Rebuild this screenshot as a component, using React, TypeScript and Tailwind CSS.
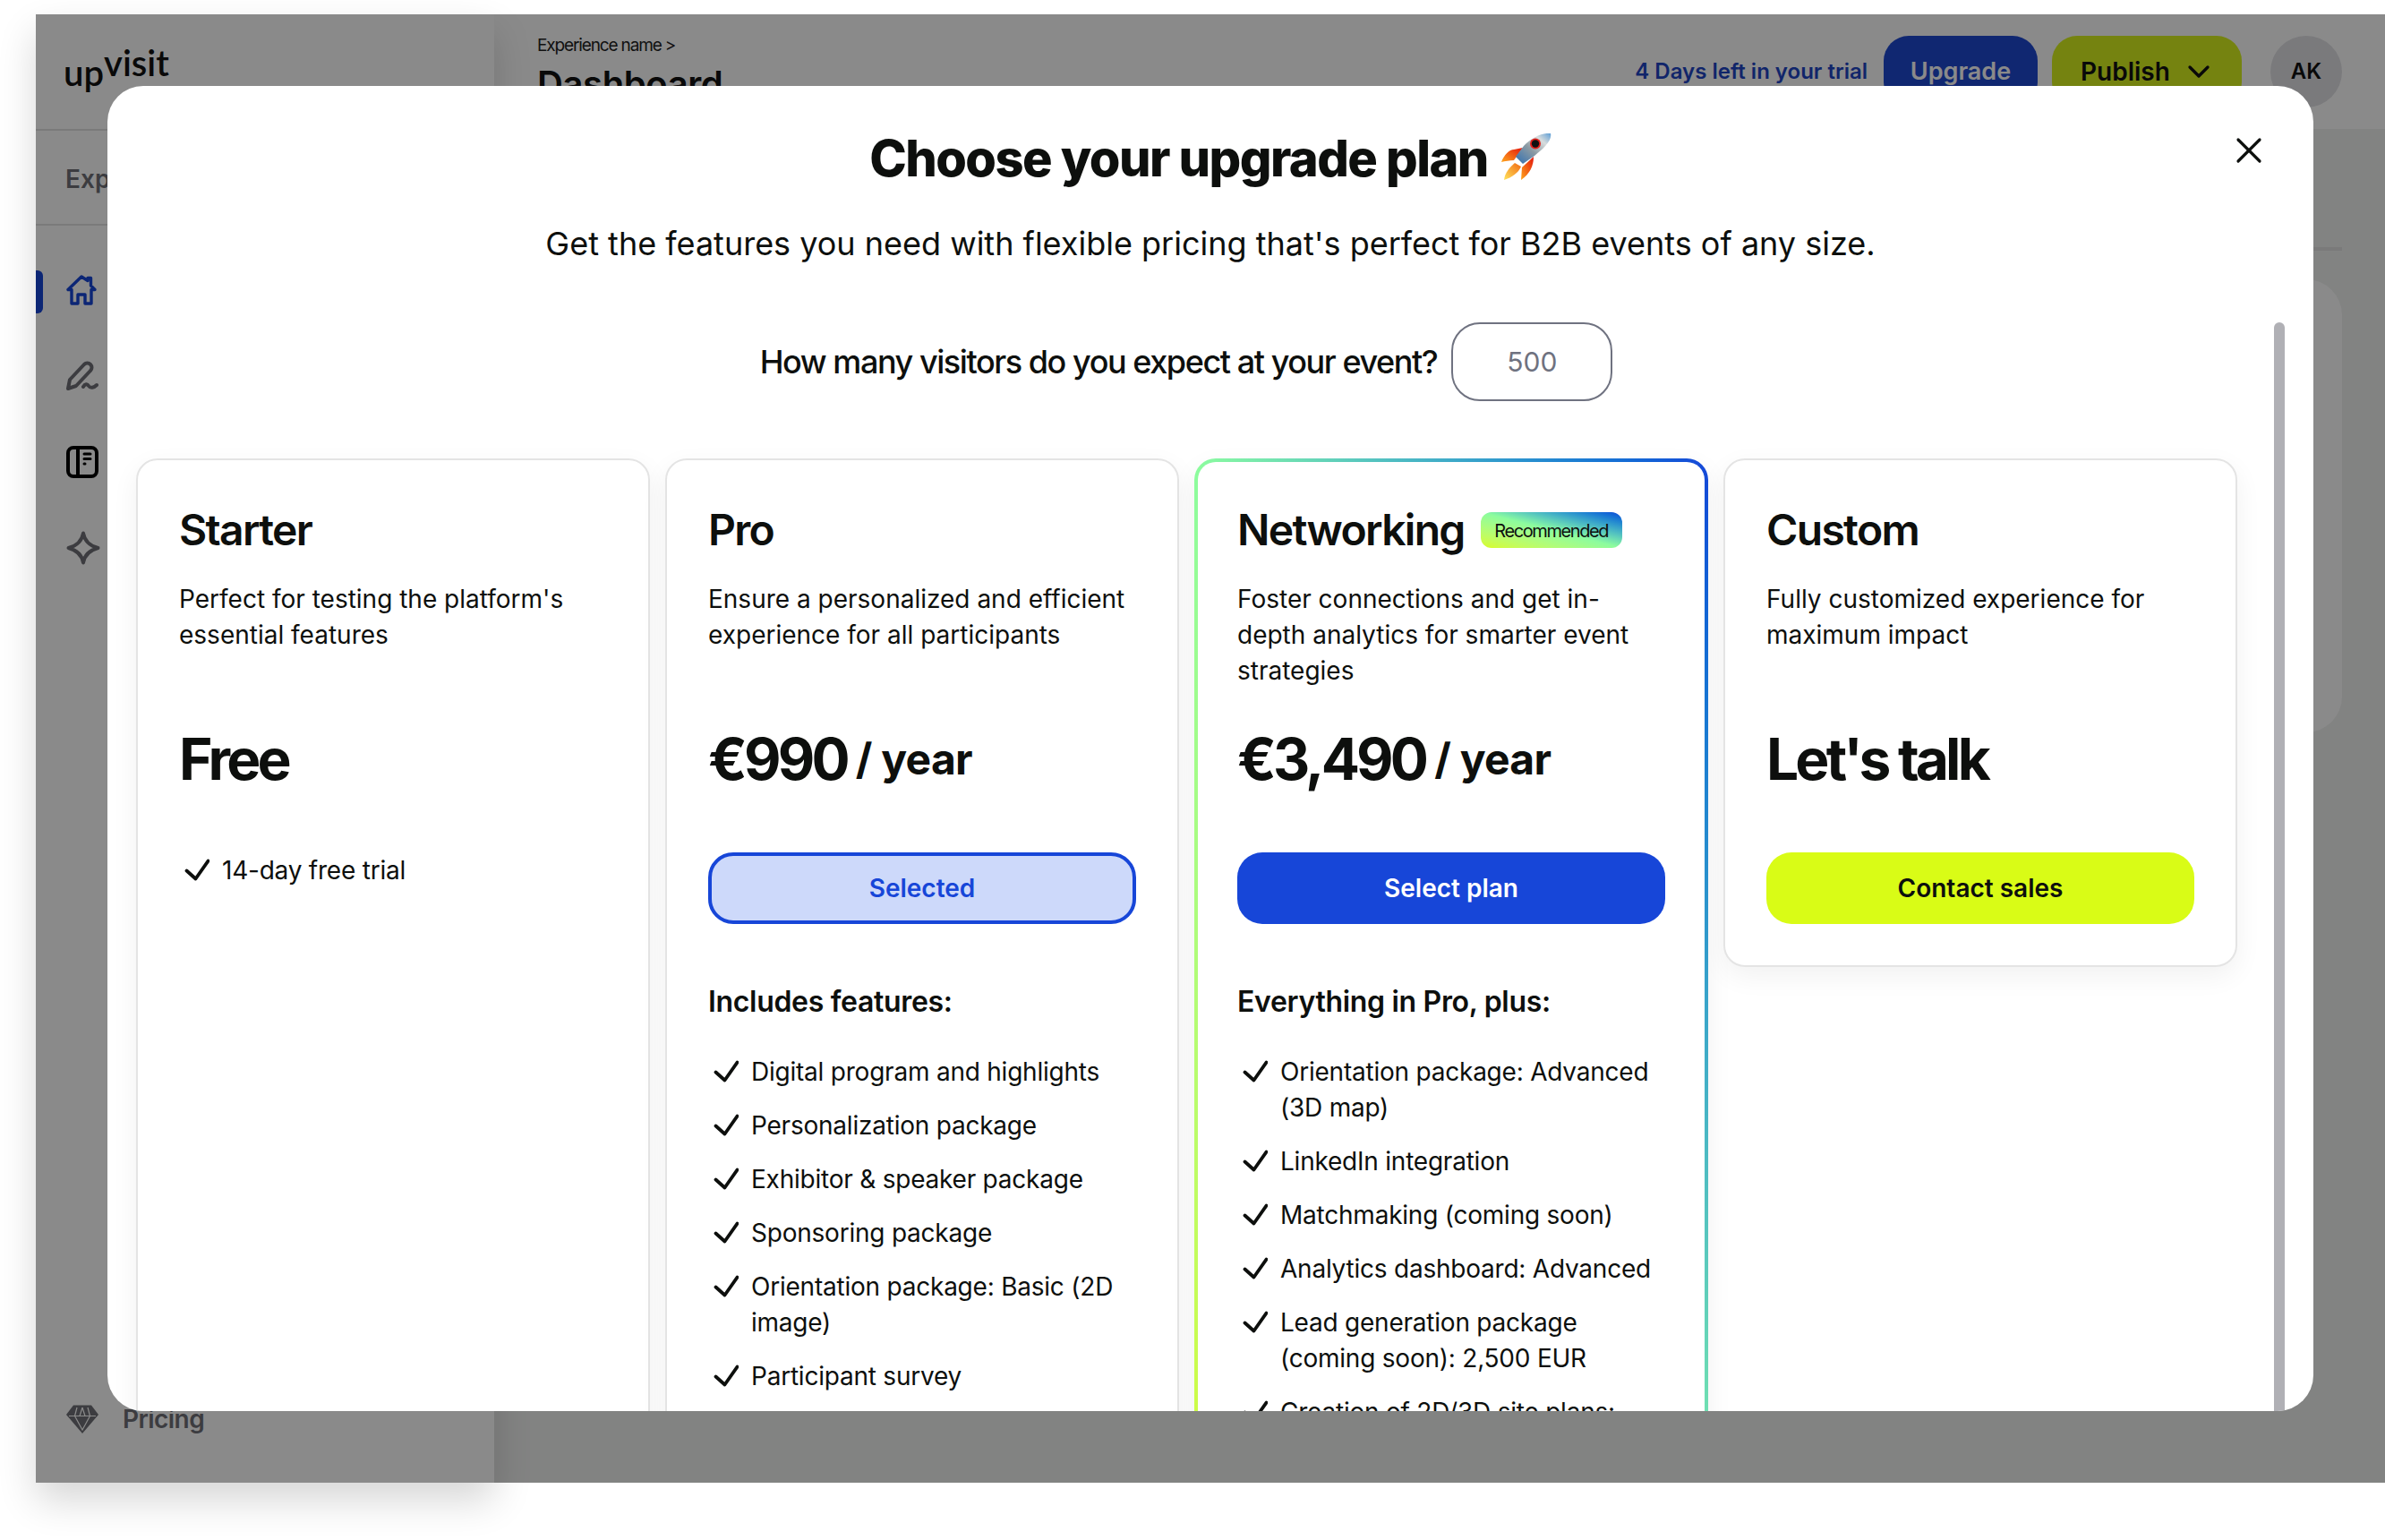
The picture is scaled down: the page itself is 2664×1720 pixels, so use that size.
import React from "react";
import { ChevronDown, X } from "lucide-react";

function Check() {
  return (
    <svg viewBox="0 0 32 32" className="w-8 h-8 shrink-0 mt-1 ml-[2px] mr-[14px]" fill="none" stroke="#0d0f0d" strokeWidth="3.8" strokeLinecap="round" strokeLinejoin="round">
      <path d="M6.5 16.5L16.5 25.5L30.5 5.5" />
    </svg>
  );
}

function Feature({ text }: { text: string }) {
  return (
    <li className="flex items-start text-[28px] leading-[40px] tracking-[-0.008em] text-[#0d0f0d]">
      <Check />
      <span>{text}</span>
    </li>
  );
}

function Rocket() {
  return (
    <svg viewBox="0 0 56 52" className="w-[56px] h-[52px] ml-[15px] -mt-[4px] shrink-0">
      <defs>
        <linearGradient id="rb" x1="1" y1="0" x2="0" y2="1">
          <stop offset="0" stopColor="#5f9fd6" />
          <stop offset="0.25" stopColor="#d8dcdc" />
          <stop offset="0.55" stopColor="#8b9aa3" />
          <stop offset="1" stopColor="#2f6fb2" />
        </linearGradient>
        <linearGradient id="rf" x1="0" y1="1" x2="1" y2="0">
          <stop offset="0" stopColor="#ffa51c" />
          <stop offset="1" stopColor="#e3150c" />
        </linearGradient>
        <linearGradient id="rg" x1="0" y1="1" x2="1" y2="0">
          <stop offset="0" stopColor="#ffe45c" />
          <stop offset="1" stopColor="#f26a12" />
        </linearGradient>
      </defs>
      <path d="M0 32C3 24 9 18 14 18L24 16L14 30C9 30 4 31 0 32Z" fill="url(#rf)" />
      <path d="M22 52L23 38L36 26C36 36 32 45 22 52Z" fill="url(#rf)" />
      <path d="M3 52C4 44 9 38 15 33L22 37C19 44 12 49 3 52Z" fill="url(#rg)" />
      <path d="M55 0C47 -1 34 4 25 14L16 26L24 34L37 25C47 17 57 8 55 0Z" fill="url(#rb)" />
      <circle cx="38" cy="11.5" r="6" fill="#e3201b" />
      <circle cx="38" cy="11.5" r="4.2" fill="#111" />
    </svg>
  );
}

function HomeIcon() {
  return (
    <svg viewBox="0 0 34 34" className="w-[34px] h-[34px]" fill="none" stroke="#1746d8" strokeWidth="3.4" strokeLinecap="round" strokeLinejoin="round">
      <path d="M17 2L2 16.5H6V32H13V22H21V32H28V16.5H32L27.5 12V3.5H24V6.5L17 2Z" />
    </svg>
  );
}

function PenIcon() {
  return (
    <svg viewBox="0 0 36 34" className="w-9 h-[34px]" fill="none" stroke="#6f7076" strokeWidth="4" strokeLinecap="round" strokeLinejoin="round">
      <path d="M2 31L4 21L20 4C22 2 25 2 27 4C29 6 29 9 27 11L11 28L2 31Z" />
      <path d="M19 29C21 25.5 23.5 25.5 25 28C27 31 31 30 34 27" />
    </svg>
  );
}

function BookIcon() {
  return (
    <svg viewBox="0 0 36 36" className="w-9 h-9" fill="none" stroke="#000" strokeWidth="4" strokeLinecap="round">
      <rect x="2" y="2" width="32" height="32" rx="6" />
      <path d="M13 2V34" />
      <path d="M20 9H27M20 14.5H27M20 20H21" strokeWidth="3" />
    </svg>
  );
}

function StarIcon() {
  return (
    <svg viewBox="0 0 38 38" className="w-[38px] h-[38px]" fill="none" stroke="#6f7076" strokeWidth="4" strokeLinejoin="round">
      <path d="M19 2.5C20.5 11 26 16.5 35.5 19C26 21.5 20.5 27 19 35.5C17.5 27 12 21.5 2.5 19C12 16.5 17.5 11 19 2.5Z" />
    </svg>
  );
}

function GemIcon() {
  return (
    <svg viewBox="0 0 36 32" className="w-9 h-8">
      <path d="M8 0.5H28L36 11L18 32L0 11L8 0.5Z" fill="#6f7076" />
      <path d="M3 12.5H33M12 3L9.5 12.5L18 28L26.5 12.5L24 3M18 3L15 12.5M18 3L21 12.5" fill="none" stroke="#ffffff" strokeWidth="1.2" />
    </svg>
  );
}

function Nav({ children, active }: { children: React.ReactNode; active?: boolean }) {
  return (
    <div className="relative h-[96px] flex items-center pl-[34px]">
      {active && <div className="absolute left-0 top-[26px] h-[48px] w-2 bg-[#1746d8] rounded-r-md" />}
      {children}
    </div>
  );
}

const cardBase = "rounded-[24px] bg-white shadow-[0_10px_30px_rgba(0,0,0,0.06)]";

function CardBody({ title, badge, desc, price, unit, children }: { title: string; badge?: boolean; desc: string; price: string; unit?: string; children?: React.ReactNode }) {
  return (
    <>
      <div className="flex items-center h-14">
        <h2 className="text-[48px] leading-[56px] font-semibold tracking-[-0.035em] text-[#0d0f0d]">{title}</h2>
        {badge && (
          <span className="ml-[18px] h-10 w-[158px] rounded-xl bg-gradient-to-tr from-[#d9fc16] via-[#8cfc9e] to-[#1746d8] text-[20px] font-normal tracking-[-0.07em] text-[#0d0f0d] flex items-center justify-center pt-[2px]">
            Recommended
          </span>
        )}
      </div>
      <p className="mt-[29px] h-[120px] text-[28px] leading-[40px] text-[#0d0f0d]">{desc}</p>
      <div className="mt-[39px] h-20 flex items-center text-[#0d0f0d] font-bold">
        <span className="text-[64px] tracking-[-0.06em]">{price}</span>
        {unit && <span className="text-[48px] ml-[10px] tracking-[-0.015em]">{unit}</span>}
      </div>
      {children}
    </>
  );
}

export default function App() {
  return (
    <div className="relative w-[2664px] h-[1720px] overflow-hidden bg-white pt-4 pl-10 font-[Inter,sans-serif]">
      <div className="relative flex h-[1640px] w-[2624px] bg-[#f1f2f1]">
        {/* sidebar */}
        <aside className="relative z-10 flex flex-col w-[512px] shrink-0 bg-white shadow-[0_20px_40px_rgba(0,0,0,0.16)]">
          <div className="h-[130px] border-b-2 border-[#e2e2e2] pl-[31px] pt-[24px] font-[Lato,sans-serif] font-semibold text-[#111] flex items-start">
            <span className="text-[40px] leading-[60px] mt-[11px]">up</span>
            <span className="text-[40px] leading-[60px]">visit</span>
          </div>
          <div className="h-[106px] border-b-2 border-[#e2e2e2] pl-[33px] pt-[4px] flex items-center text-[28px] font-semibold text-[#6f7076]">
            Experiences
          </div>
          <nav className="mt-[24px] flex flex-col">
            <Nav active><HomeIcon /></Nav>
            <Nav><PenIcon /></Nav>
            <Nav><BookIcon /></Nav>
            <Nav><StarIcon /></Nav>
          </nav>
          <div className="mt-auto mb-[51px] h-10 flex items-center pl-[34px]">
            <GemIcon />
            <span className="ml-[27px] text-[28px] font-semibold text-[#6f7076] tracking-[-0.02em]">Pricing</span>
          </div>
        </aside>

        {/* main */}
        <main className="flex-1 min-w-0">
          <header className="h-[128px] bg-white pl-12 pr-12 flex items-center justify-between">
            <div className="self-start pt-[22px]">
              <div className="text-[19px] leading-[26px] tracking-[-0.06em] text-[#222]">Experience name &gt;</div>
              <div className="mt-[6px] text-[40px] leading-[48px] font-semibold tracking-[-0.01em] text-[#111]">Dashboard</div>
            </div>
            <div className="flex items-center">
              <span className="text-[24px] font-semibold text-[#1f45c4] mr-[18px]">4 Days left in your trial</span>
              <button className="w-[172px] h-20 rounded-[28px] bg-[#1f49d1] text-white text-[27px] font-semibold">Upgrade</button>
              <button className="ml-4 w-[212px] h-20 rounded-[28px] bg-[#d9f21f] text-[#111] text-[28px] font-semibold flex items-center pl-[32px]">
                Publish
                <ChevronDown size={40} strokeWidth={2} className="ml-[12px]" />
              </button>
              <div className="ml-8 w-20 h-20 rounded-full bg-[#e2e2e6] text-[#111] text-[24px] font-semibold flex items-center justify-center">AK</div>
            </div>
          </header>
          <div className="px-12">
            <div className="mt-[132px] h-1 bg-[#e2e2e2]" />
            <div className="mt-8 h-[506px] rounded-[40px] bg-white" />
          </div>
        </main>

        <div className="absolute inset-0 z-20 bg-black/46" />

        {/* modal */}
        <section className="absolute z-30 left-[80px] top-[80px] w-[2464px] h-[1480px] rounded-[40px] bg-white overflow-hidden">
          <div className="flex flex-col items-center pt-[49px]">
            <div className="flex items-center h-16">
              <h1 className="text-[56px] leading-[64px] font-extrabold tracking-[-0.028em] text-[#0d0f0d]">Choose your upgrade plan</h1>
              <Rocket />
            </div>
            <p className="mt-[39px] text-[36px] leading-[48px] text-[#0d0f0d]">Get the features you need with flexible pricing that's perfect for B2B events of any size.</p>
            <div className="mt-16 mr-[54px] flex items-center h-[88px]">
              <span className="text-[36px] font-medium tracking-[-0.04em] text-[#0d0f0d]">How many visitors do you expect at your event?</span>
              <div className="ml-4 w-[180px] h-[88px] rounded-[32px] border-2 border-[#6f7280] flex items-center justify-center text-[30px] text-[#6f7280]">500</div>
            </div>
          </div>

          <div className="mt-16 ml-8 w-[2347px] grid grid-cols-4 gap-[17px] items-start">
            {/* Starter */}
            <article className={`${cardBase} h-[1300px] border-2 border-[#e4e4e4] pt-[50px] px-[46px]`}>
              <CardBody title="Starter" desc="Perfect for testing the platform's essential features" price="Free">
                <ul className="mt-16 flex flex-col gap-5">
                  <Feature text="14-day free trial" />
                </ul>
              </CardBody>
            </article>

            {/* Pro */}
            <article className={`${cardBase} h-[1300px] border-2 border-[#e4e4e4] pt-[50px] px-[46px]`}>
              <CardBody title="Pro" desc="Ensure a personalized and efficient experience for all participants" price="€990" unit="/ year">
                <button className="mt-16 w-full h-20 rounded-[28px] border-4 border-[#1746d8] bg-[#cdd9fa] text-[#1746d8] text-[28px] font-semibold">Selected</button>
                <h3 className="mt-[65px] text-[32px] leading-[44px] font-semibold tracking-[-0.01em] text-[#0d0f0d]">Includes features:</h3>
                <ul className="mt-9 flex flex-col gap-5">
                  <Feature text="Digital program and highlights" />
                  <Feature text="Personalization package" />
                  <Feature text="Exhibitor & speaker package" />
                  <Feature text="Sponsoring package" />
                  <Feature text="Orientation package: Basic (2D image)" />
                  <Feature text="Participant survey" />
                </ul>
              </CardBody>
            </article>

            {/* Networking */}
            <article className="h-[1300px] rounded-[24px] p-1 bg-gradient-to-tr from-[#d9fc16] via-[#8cfc9e] to-[#1746d8] shadow-[0_10px_30px_rgba(0,0,0,0.06)]">
              <div className="h-full rounded-[20px] bg-white pt-[48px] px-[44px]">
                <CardBody title="Networking" badge desc="Foster connections and get in-depth analytics for smarter event strategies" price="€3,490" unit="/ year">
                  <button className="mt-16 w-full h-20 rounded-[28px] bg-[#1746d8] text-white text-[28px] font-semibold">Select plan</button>
                  <h3 className="mt-[65px] text-[32px] leading-[44px] font-semibold tracking-[-0.01em] text-[#0d0f0d]">Everything in Pro, plus:</h3>
                  <ul className="mt-9 flex flex-col gap-5">
                    <Feature text="Orientation package: Advanced (3D map)" />
                    <Feature text="LinkedIn integration" />
                    <Feature text="Matchmaking (coming soon)" />
                    <Feature text="Analytics dashboard: Advanced" />
                    <Feature text="Lead generation package (coming soon): 2,500 EUR" />
                    <Feature text="Creation of 2D/3D site plans:" />
                  </ul>
                </CardBody>
              </div>
            </article>

            {/* Custom */}
            <article className={`${cardBase} border-2 border-[#e4e4e4] pt-[50px] px-[46px] pb-[46px]`}>
              <CardBody title="Custom" desc="Fully customized experience for maximum impact" price="Let's talk">
                <button className="mt-16 w-full h-20 rounded-[28px] bg-[#d9fc16] text-[#0d0f0d] text-[28px] font-semibold">Contact sales</button>
              </CardBody>
            </article>
          </div>

          <button className="absolute left-[2368px] top-[48px] text-[#0d0f0d]" aria-label="Close">
            <X size={48} strokeWidth={1.6} />
          </button>
          <div className="absolute left-[2420px] top-[264px] bottom-0 w-3 rounded-t-full bg-[#b0b0b5]" />
        </section>
      </div>
    </div>
  );
}
